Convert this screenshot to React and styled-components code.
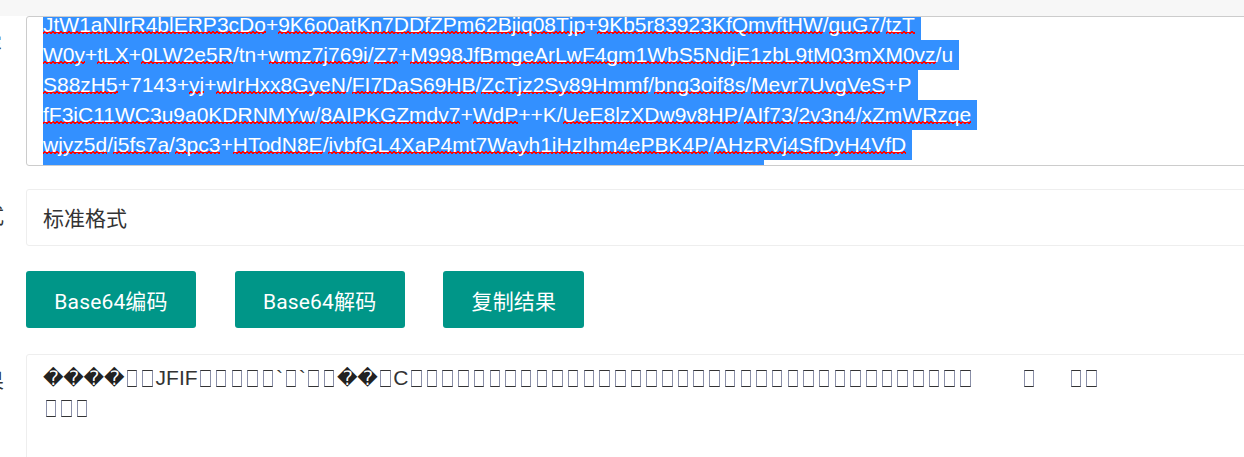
import React from "react";
import styled, { createGlobalStyle } from "styled-components";

const Global = createGlobalStyle`
  html, body { margin: 0; padding: 0; background: #fff; overflow: hidden; height: 457px; }
  body { font-family: "Liberation Sans", "Noto Sans CJK SC", sans-serif; color: #333; }
`;

const Page = styled.div`
  width: 1244px;
  height: 457px;
  overflow: hidden;
`;
const TopBar = styled.div`
  height: 16px;
  background: #f7f7f7;
`;
const Row = styled.div`
  display: grid;
  grid-template-columns: 26px 1320px;
  margin-bottom: ${(p) => p.$gap || 0}px;
`;
const Label = styled.div`
  display: flex;
  justify-content: flex-end;
  align-items: flex-start;
  overflow: hidden;
  white-space: nowrap;
  font-size: 21px;
  line-height: 30px;
  padding-right: ${(p) => p.$right || 22}px;
  padding-top: ${(p) => p.$top || 0}px;
  color: #333;
  box-sizing: border-box;
  min-width: 0;
`;
const EditBox = styled.div`
  height: 150px;
  box-sizing: border-box;
  border: 1px solid #ccc;
  border-radius: 3px;
  background: #fff;
  padding: 1px 0 0 16px;
  overflow: hidden;
`;
const Scroller = styled.div`
  margin-top: -8px;
  font-size: 21px;
  line-height: 30px;
  white-space: nowrap;
`;
const SelectedLine = styled.div`
  width: fit-content;
  height: 30px;
  background: #3390ff;
  color: #fff;
  padding-right: 6px;
`;
const CutLine = styled.div`
  width: 721px;
  height: 30px;
  background: #3390ff;
`;
const Flagged = styled.span`
  background-image:
    linear-gradient(45deg, transparent 55%, #f00 55%, #f00 85%, transparent 85%),
    linear-gradient(135deg, transparent 15%, #f00 15%, #f00 45%, transparent 45%);
  background-size: 4px 3px;
  background-repeat: repeat-x;
  background-position: 0 calc(100% - 2px);
`;
const SelectBox = styled.div`
  height: 57px;
  box-sizing: border-box;
  border: 1px solid #eee;
  border-radius: 3px;
  padding-left: 16px;
  font-size: 21px;
  line-height: 55px;
  color: #333;
  font-family: "Noto Sans CJK SC", sans-serif;
`;
const Buttons = styled.div`
  display: flex;
  grid-column: 2;
  gap: 38.7px;
`;
const Button = styled.button`
  height: 57px;
  width: ${(p) => p.$w}px;
  padding: 0;
  border: 0;
  border-radius: 3px;
  background: #009688;
  color: #fff;
  font-family: Roboto, "Noto Sans CJK SC", sans-serif;
  font-size: 21px;
  letter-spacing: 0.15px;
`;
const OutputBox = styled.div`
  height: 200px;
  box-sizing: border-box;
  border: 1px solid #eee;
  border-radius: 3px;
  padding: 8px 0 0 16px;
  width: 1320px;
  font-size: 21px;
  line-height: 30px;
  color: #333;
`;
const OutputLine = styled.div`
  display: flex;
  align-items: center;
  height: 30px;
  white-space: pre;
`;
const Bad = styled.span`
  font-family: "DejaVu Sans", sans-serif;
  font-size: 20px;
  width: 20.3px;
  text-align: center;
  color: #222;
`;
const Tofu = styled.span`
  display: inline-block;
  box-sizing: border-box;
  width: 10.5px;
  height: 17px;
  margin: 0 2.6px;
  border: 1px solid #333;
  border-left-color: #8a8fa8;
  border-right-color: #8a8fa8;
`;
const Space = styled.span`
  display: inline-block;
  width: ${(p) => p.$w}px;
`;

const LINES = [
  "JtW1aNIrR4blERP3cDo+9K6o0atKn7DDfZPm62Bjiq08Tjp+9Kb5r83923KfQmvftHW/guG7/tzT",
  "W0y+tLX+0LW2e5R/tn+wmz7j769i/Z7+M998JfBmgeArLwF4gm1WbS5NdjE1zbL9tM03mXM0vz/u",
  "S88zH5+7143+yj+wIrHxx8GyeN/FI7DaS69HB/ZcTjz2Sy89Hmmf/bng3oif8s/Mevr7UvgVeS+P",
  "fF3iC11WC3u9a0KDRNMYw/8AIPKGZmdv7+WdP++K/UeE8lzXDw9v8HP/AIf73/2v3n4/xZmWRzqe",
  "wjyz5d/i5fs7a/3pc3+HTodN8E/ivbfGL4XaP4mt7Wayh1iHzIhm4ePBK4P/AHzRVj4SfDyH4VfD",
];
const CORRECT = new Set(["tn", "7143", "u", "P", "K"]);

const tokens = (line) =>
  line.split(/([+/]+)/).map((t, i) =>
    /^[+/]*$/.test(t) || CORRECT.has(t) ? (
      <React.Fragment key={i}>{t}</React.Fragment>
    ) : (
      <Flagged key={i}>{t}</Flagged>
    )
  );

const bad = (n) => Array.from({ length: n }, (_, i) => <Bad key={i}>{"\uFFFD"}</Bad>);
const tofu = (n) => Array.from({ length: n }, (_, i) => <Tofu key={i} />);

export default function App() {
  return (
    <Page>
      <Global />
      <TopBar />
      <Row $gap={23}>
        <Label $top={14} $right={24}>编码内容</Label>
        <EditBox>
          <Scroller>
            {LINES.map((l, i) => (
              <SelectedLine key={i}>{tokens(l)}</SelectedLine>
            ))}
            <CutLine />
          </Scroller>
        </EditBox>
      </Row>
      <Row $gap={25}>
        <Label $top={12}>编码格式</Label>
        <SelectBox>标准格式</SelectBox>
      </Row>
      <Row $gap={26}>
        <Buttons>
          <Button $w={170}>Base64编码</Button>
          <Button $w={170}>Base64解码</Button>
          <Button $w={141}>复制结果</Button>
        </Buttons>
      </Row>
      <Row>
        <Label $top={12}>编码结果</Label>
        <OutputBox>
          <OutputLine>
            {bad(4)}
            {tofu(2)}JFIF{tofu(5)}`{tofu(1)}`{tofu(2)}
            {bad(2)}
            {tofu(1)}C{tofu(36)}
            <Space $w={48} />
            {tofu(1)}
            <Space $w={31} />
            {tofu(2)}
          </OutputLine>
          <OutputLine>{tofu(3)}</OutputLine>
        </OutputBox>
      </Row>
    </Page>
  );
}
